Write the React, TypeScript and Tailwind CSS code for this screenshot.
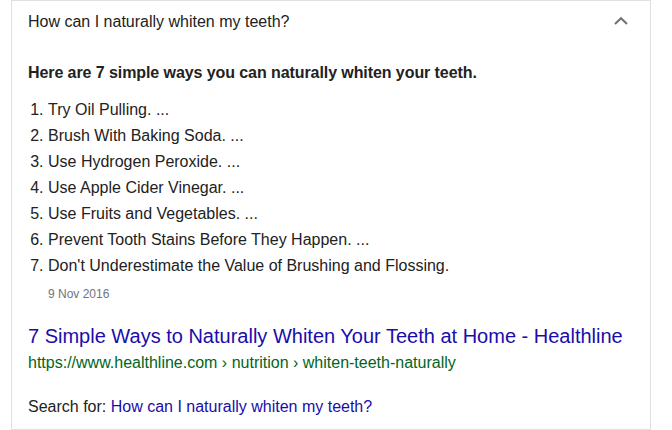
export default function App() {
  const steps = [
    "Try Oil Pulling. ...",
    "Brush With Baking Soda. ...",
    "Use Hydrogen Peroxide. ...",
    "Use Apple Cider Vinegar. ...",
    "Use Fruits and Vegetables. ...",
    "Prevent Tooth Stains Before They Happen. ...",
    "Don't Underestimate the Value of Brushing and Flossing.",
  ];

  return (
    <div className="w-[672px] h-[430px] bg-white font-['Liberation_Sans',Arial,sans-serif] text-[#222]">
      <div className="ml-[11px] w-[640px] h-[430px] border border-[#e0e0e0] px-4">
        <div className="h-[42px] flex items-center justify-between">
          <span className="text-[16px] leading-[22px]">How can I naturally whiten my teeth?</span>
          <svg width="24" height="24" viewBox="0 0 24 24" className="mr-[1px] mt-[-3px]">
            <polyline points="6,15 12,9.2 18,15" fill="none" stroke="#70757a" strokeWidth="2.2" />
          </svg>
        </div>

        <div className="mt-[18px] text-[16px] leading-[24px] font-bold tracking-[-0.08px]">
          Here are 7 simple ways you can naturally whiten your teeth.
        </div>

        <ol className="mt-[12px] list-decimal pl-[20px] text-[16px] leading-[26px]">
          {steps.map((s) => (
            <li key={s}>{s}</li>
          ))}
        </ol>

        <div className="mt-[7px] pl-[20px] text-[12px] leading-[16px] text-[#70757a]">9 Nov 2016</div>

        <a href="#" className="block mt-[21px] text-[20px] leading-[26px] text-[#1a0dab]">
          7 Simple Ways to Naturally Whiten Your Teeth at Home - Healthline
        </a>
        <div className="mt-[3px] text-[16px] leading-[22px] text-[#006621]">
          https://www.healthline.com › nutrition › whiten-teeth-naturally
        </div>

        <div className="mt-[22px] text-[16px] leading-[22px]">
          Search for: <a href="#" className="text-[#1a0dab]">How can I naturally whiten my teeth?</a>
        </div>
      </div>
    </div>
  );
}
